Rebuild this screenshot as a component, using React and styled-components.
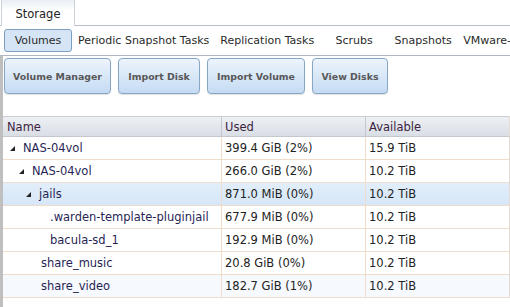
import React from "react";
import styled, { createGlobalStyle } from "styled-components";

const Global = createGlobalStyle`
  html, body { margin: 0; padding: 0; background: #fff; }
  body { font-family: "DejaVu Sans", Verdana, sans-serif; font-size: 11px; color: #222; overflow: hidden; }
  * { box-sizing: border-box; }
`;

const Page = styled.div`
  width: 510px;
  height: 307px;
  display: flex;
  flex-direction: column;
`;

const TopStrip = styled.div`
  display: flex;
  height: 26px;
  border-bottom: 1px solid #b8bfc8;
`;

const TopTab = styled.div`
  margin-left: 1px;
  width: 74px;
  height: 26px;
  margin-bottom: -1px;
  border: 1px solid #cdd3da;
  border-top: none;
  border-bottom: none;
  background: linear-gradient(#e9eef4, #fff 40%);
  display: flex;
  align-items: center;
  justify-content: center;
  font-size: 11.5px;
  color: #222;
  padding-top: 2px;
`;

const SubBar = styled.div`
  display: flex;
  align-items: center;
  height: 30px;
  padding: 0 0 0 4px;
  gap: 1px;
  border-bottom: 1px solid #b0b7c0;
  white-space: nowrap;
  overflow: hidden;
`;

const SubTab = styled.div`
  flex: none;
  min-width: 68px;
  height: 23px;
  padding: 0 4px;
  display: flex;
  align-items: center;
  justify-content: center;
  font-size: 11px;
  color: #2a2a2a;
  border: 1px solid ${(p) => (p.$active ? "#7da0c2" : "transparent")};
  border-radius: 3px;
  background: ${(p) => (p.$active ? "#d5e5f6" : "transparent")};
`;

const Panel = styled.div`
  flex: 1;
  display: flex;
  flex-direction: column;
  border-left: 3px solid #bfbfbf;
`;

const Toolbar = styled.div`
  display: flex;
  gap: 7px;
  padding: 2px 0 0 1px;
  height: 60px;
`;

const Btn = styled.div`
  width: ${(p) => p.$w}px;
  height: 36px;
  display: flex;
  align-items: center;
  justify-content: center;
  border: 1px solid #86a6c6;
  border-radius: 4px;
  background: linear-gradient(#edf4fc, #c5dbf3);
  box-shadow: 0 1px 1px rgba(0, 0, 0, 0.12);
  font-weight: bold;
  font-size: 9.4px;
  color: #585858;
`;

const Table = styled.div`
  width: 507px;
  border-right: 1px solid #e6dcd4;
`;

const Row = styled.div`
  display: grid;
  grid-template-columns: 218px 144px 1fr;
  height: ${(p) => (p.$head ? 21 : 23)}px;
  border-bottom: 1px solid ${(p) => (p.$head ? "#c3c8cf" : "#f0dccb")};
  border-top: ${(p) => (p.$head ? "1px solid #c9ced5" : "none")};
  background: ${(p) =>
    p.$head
      ? "linear-gradient(#eef0f4, #d9dee5)"
      : p.$sel
      ? "linear-gradient(#e2eefa, #d6e7f8)"
      : p.$alt
      ? "#f6f9fe"
      : "#fff"};
`;

const Cell = styled.div`
  display: flex;
  align-items: center;
  padding-left: ${(p) => (p.$pad != null ? p.$pad : 3)}px;
  border-left: ${(p) => (p.$first ? "none" : `1px solid ${p.$head ? "#c3c8cf" : "#f0dccb"}`)};
  font-size: 11.5px;
  color: ${(p) => (p.$head ? "#3b2340" : p.$name ? "#281f55" : "#222")};
  white-space: nowrap;
  overflow: hidden;
`;

const Toggle = styled.svg`
  width: 5px;
  height: 5px;
  margin-right: 8px;
  flex: none;
`;

const Tri = () => (
  <Toggle viewBox="0 0 5 5">
    <polygon points="5,0 5,5 0,5" fill="#222" />
  </Toggle>
);

const rows = [
  { name: "NAS-04vol", used: "399.4 GiB (2%)", avail: "15.9 TiB", pad: 7, tri: true },
  { name: "NAS-04vol", used: "266.0 GiB (2%)", avail: "10.2 TiB", pad: 16, tri: true },
  { name: "jails", used: "871.0 MiB (0%)", avail: "10.2 TiB", pad: 23, tri: true, sel: true },
  { name: ".warden-template-pluginjail", used: "677.9 MiB (0%)", avail: "10.2 TiB", pad: 47 },
  { name: "bacula-sd_1", used: "192.9 MiB (0%)", avail: "10.2 TiB", pad: 47 },
  { name: "share_music", used: "20.8 GiB (0%)", avail: "10.2 TiB", pad: 38 },
  { name: "share_video", used: "182.7 GiB (1%)", avail: "10.2 TiB", pad: 38, alt: true },
];

export default function App() {
  return (
    <Page>
      <Global />
      <TopStrip>
        <TopTab>Storage</TopTab>
      </TopStrip>
      <SubBar>
        <SubTab $active>Volumes</SubTab>
        <SubTab>Periodic Snapshot Tasks</SubTab>
        <SubTab>Replication Tasks</SubTab>
        <SubTab>Scrubs</SubTab>
        <SubTab>Snapshots</SubTab>
        <SubTab>VMware-Snapshots</SubTab>
      </SubBar>
      <Panel>
        <Toolbar>
          <Btn $w={107}>Volume Manager</Btn>
          <Btn $w={82}>Import Disk</Btn>
          <Btn $w={98}>Import Volume</Btn>
          <Btn $w={76}>View Disks</Btn>
        </Toolbar>
        <Table>
          <Row $head>
            <Cell $head $first $pad={4}>Name</Cell>
            <Cell $head>Used</Cell>
            <Cell $head>Available</Cell>
          </Row>
          {rows.map((r, i) => (
            <Row key={i} $sel={r.sel} $alt={r.alt}>
              <Cell $first $name $pad={r.pad}>
                {r.tri && <Tri />}
                {r.name}
              </Cell>
              <Cell>{r.used}</Cell>
              <Cell>{r.avail}</Cell>
            </Row>
          ))}
        </Table>
      </Panel>
    </Page>
  );
}
